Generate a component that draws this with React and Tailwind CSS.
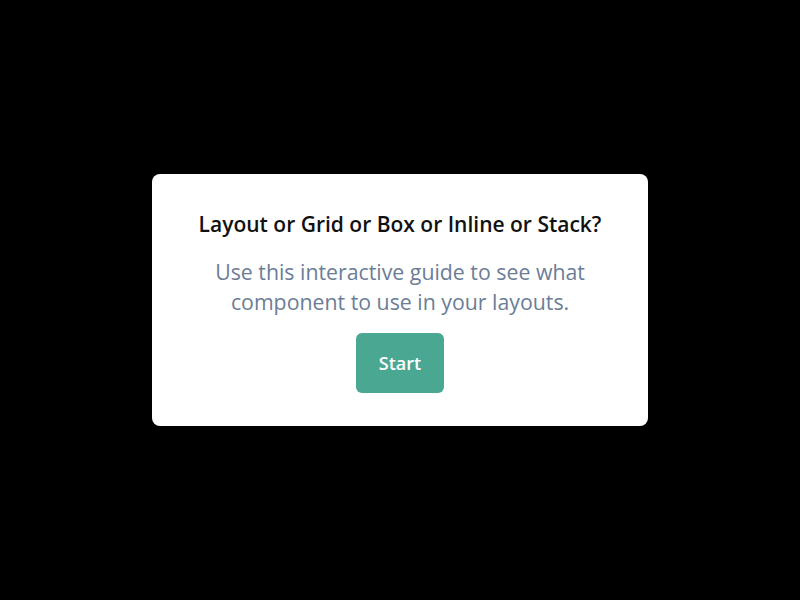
import React from "react";

export default function App() {
  return (
    <div className="w-[800px] h-[600px] bg-black flex items-center justify-center" style={{ fontFamily: "'Open Sans', Lato, sans-serif" }}>
      <div className="w-[496px] h-[252px] bg-white rounded-lg flex flex-col items-center pt-[36px]">
        <h1 className="text-[21px] leading-[28px] font-semibold text-[#111]">
          Layout or Grid or Box or Inline or Stack?
        </h1>
        <p className="mt-[19px] text-[21.3px] leading-[30px] text-[#6b7d97] text-center w-[420px]">
          Use this interactive guide to see what component to use in your layouts.
        </p>
        <button className="mt-[16px] w-[88px] h-[60px] rounded-md bg-[#4aa792] text-white text-[18px] font-semibold">
          Start
        </button>
      </div>
    </div>
  );
}
